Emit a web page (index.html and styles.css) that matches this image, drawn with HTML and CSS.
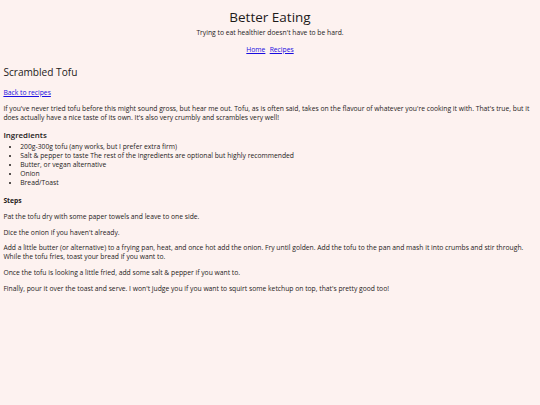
FILE: index.html
```html
<!DOCTYPE html>
<html lang="en">
<head>
<meta charset="utf-8">
<title>Better Eating</title>
<link rel="stylesheet" href="styles.css">
</head>
<body>
<header class="site-header">
  <h1 class="site-title">Better Eating</h1>
  <p class="tagline">Trying to eat healthier doesn't have to be hard.</p>
  <nav class="nav"><a href="#">Home</a> <a href="#">Recipes</a></nav>
</header>
<main class="recipe">
  <h2 class="recipe-title">Scrambled Tofu</h2>
  <p class="back"><a href="#">Back to recipes</a></p>
  <p>If you've never tried tofu before this might sound gross, but hear me out. Tofu, as is often said, takes on the flavour of whatever you're cooking it with. That's true, but it does actually have a nice taste of its own. It's also very crumbly and scrambles very well!</p>
  <h3 class="section-title">Ingredients</h3>
  <ul class="ingredients">
    <li>200g-300g tofu (any works, but I prefer extra firm)</li>
    <li>Salt &amp; pepper to taste The rest of the ingredients are optional but highly recommended</li>
    <li>Butter, or vegan alternative</li>
    <li>Onion</li>
    <li>Bread/Toast</li>
  </ul>
  <h4 class="section-title steps-title">Steps</h4>
  <p>Pat the tofu dry with some paper towels and leave to one side.</p>
  <p>Dice the onion if you haven't already.</p>
  <p>Add a little butter (or alternative) to a frying pan, heat, and once hot add the onion. Fry until golden. Add the tofu to the pan and mash it into crumbs and stir through. While the tofu fries, toast your bread if you want to.</p>
  <p>Once the tofu is looking a little fried, add some salt &amp; pepper if you want to.</p>
  <p>Finally, pour it over the toast and serve. I won't judge you if you want to squirt some ketchup on top, that's pretty good too!</p>
</main>
</body>
</html>
```
FILE: styles.css
```css
html {
  background: #fdf2f0;
}
body {
  margin: 3.375px;
  font-family: "Open Sans", sans-serif;
  font-size: 6.75px;
  color: #1e1a1a;
}
a {
  color: #1a0de0;
}
.site-header {
  text-align: center;
}
.site-title {
  font-size: 13.5px;
  font-weight: 500;
  margin: 4.64px 0 1.94px;
}
.tagline {
  margin: 0 0 7.85px;
}
.nav a + a {
  margin-left: 2.5px;
}
.recipe-title {
  font-size: 10.125px;
  font-weight: 500;
  margin: 10.8px 0 8.44px;
}
p {
  margin: 6.75px 0;
}
.back {
  margin-top: 9.45px;
}
.section-title {
  font-size: 7.9px;
  font-weight: 600;
  margin: 8.52px 0 0;
}
.steps-title {
  font-size: 6.75px;
  font-weight: 700;
  margin: 9.3px 0 0;
}
.ingredients {
  margin: 1.5px 0 0;
  padding-left: 16.875px;
}
```
